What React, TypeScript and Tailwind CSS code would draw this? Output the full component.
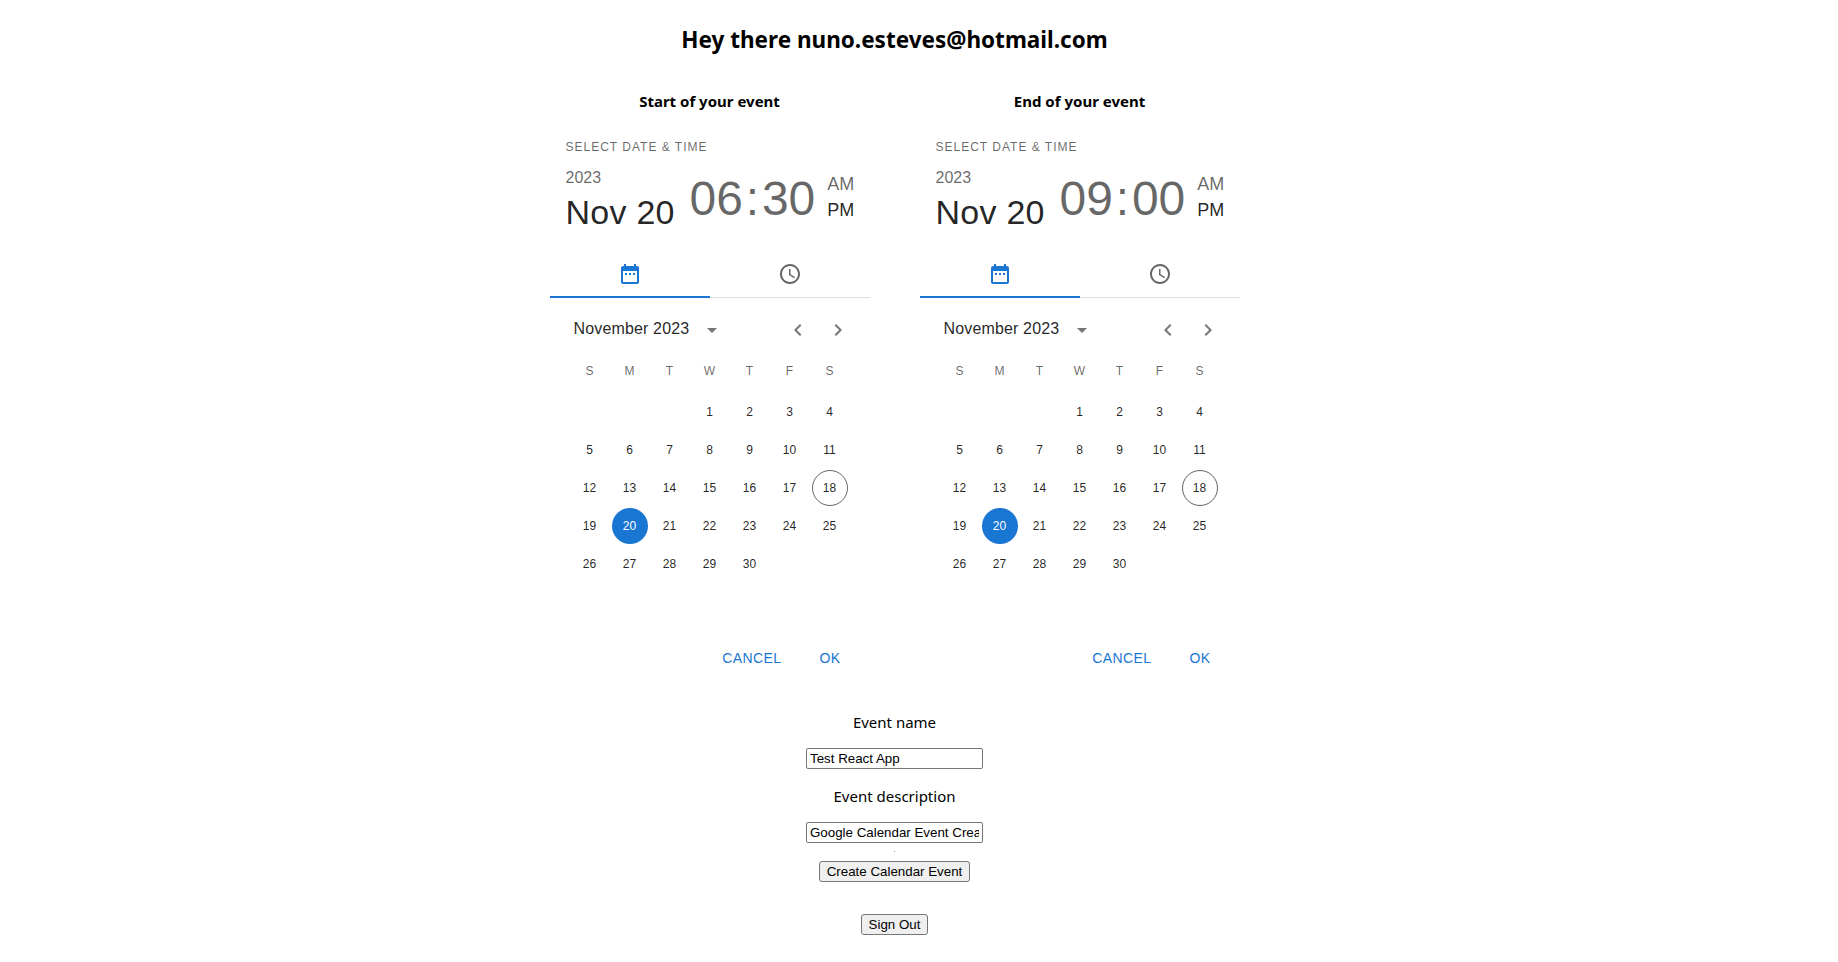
const days = [
  [null, null, null, 1, 2, 3, 4],
  [5, 6, 7, 8, 9, 10, 11],
  [12, 13, 14, 15, 16, 17, 18],
  [19, 20, 21, 22, 23, 24, 25],
  [26, 27, 28, 29, 30, null, null],
];
const weekdays = ["S", "M", "T", "W", "T", "F", "S"];

function Picker({ title, hour, minute }: { title: string; hour: string; minute: string }) {
  return (
    <div className="w-[320px] shrink-0 font-['Liberation_Sans',sans-serif]">
      <h3 className="h-[22px] text-center font-['Noto_Sans',sans-serif] text-[15px] leading-[22px] font-bold text-black">
        {title}
      </h3>
      <div className="mt-[25px] px-4">
        <div className="text-[12px] leading-[20px] tracking-[0.08333em] text-[#0009]">SELECT DATE &amp; TIME</div>
        <div className="mt-[9px] flex">
          <div className="w-[124px] shrink-0">
            <div className="text-[16px] leading-[24px] text-[#0009]">2023</div>
            <div className="mt-[2px] text-[34px] leading-[40px] tracking-[0.00735em] text-[#000000de]">Nov 20</div>
          </div>
          <div className="mt-[5px] flex h-[56px] shrink-0 text-[48px] leading-[56px] text-[#0009]">
            <span>{hour}</span>
            <span className="w-[19px] text-center">:</span>
            <span>{minute}</span>
          </div>
          <div className="mt-[5px] ml-[12px] shrink-0 text-[18px] leading-[26px]">
            <div className="text-[#0009]">AM</div>
            <div className="text-[#000000de]">PM</div>
          </div>
        </div>
      </div>
      <div className="mt-[18px] flex h-[48px] border-b border-[#e0e0e0]">
        <div className="-mb-px flex w-1/2 items-center justify-center border-b-2 border-[#1976d2]">
          <svg viewBox="0 0 24 24" className="mt-[1px] h-6 w-6 fill-[#1976d2]">
            <path d="M9 11H7v2h2v-2zm4 0h-2v2h2v-2zm4 0h-2v2h2v-2zm2-7h-1V2h-2v2H8V2H6v2H5c-1.11 0-1.99.9-1.99 2L3 20c0 1.1.89 2 2 2h14c1.1 0 2-.9 2-2V6c0-1.1-.9-2-2-2zm0 16H5V9h14v11z" />
          </svg>
        </div>
        <div className="flex w-1/2 items-center justify-center">
          <svg viewBox="0 0 24 24" className="h-6 w-6 fill-[#0009]">
            <path d="M11.99 2C6.47 2 2 6.48 2 12s4.47 10 9.99 10C17.52 22 22 17.52 22 12S17.52 2 11.99 2zM12 20c-4.42 0-8-3.58-8-8s3.58-8 8-8 8 3.58 8 8-3.58 8-8 8z" />
            <path d="M12.5 7H11v6l5.25 3.15.75-1.23-4.5-2.67z" />
          </svg>
        </div>
      </div>
      <div className="mt-[16px] flex h-[30px] items-center pr-[12px] pl-[24px]">
        <span className="text-[16px] leading-[24px] tracking-[0.00938em] text-[#000000de]">November 2023</span>
        <svg viewBox="0 0 24 24" className="mt-[1px] ml-[11px] h-6 w-6 fill-[#0000008a]">
          <path d="M7 10l5 5 5-5z" />
        </svg>
        <svg viewBox="0 0 24 24" className="mt-[1px] ml-auto h-6 w-6 fill-[#0000008a]">
          <path d="M15.41 16.59L10.83 12l4.58-4.59L14 6l-6 6 6 6 1.41-1.41z" />
        </svg>
        <svg viewBox="0 0 24 24" className="mt-[1px] mr-[8px] ml-[16px] h-6 w-6 fill-[#0000008a]">
          <path d="M8.59 16.59L13.17 12 8.59 7.41 10 6l6 6-6 6-1.41-1.41z" />
        </svg>
      </div>
      <div className="mt-[6px] px-[20px]">
        <div className="grid h-[43px] grid-cols-7 items-start pt-[12px] text-center text-[12px] text-[#0009]">
          {weekdays.map((d, i) => (
            <span key={i}>{d}</span>
          ))}
        </div>
        {days.map((week, w) => (
          <div key={w} className="grid h-[38px] grid-cols-7 items-center justify-items-center">
            {week.map((d, i) => (
              <div
                key={i}
                className={
                  "flex h-[36px] w-[36px] items-center justify-center rounded-full text-[12px] " +
                  (d === 20
                    ? "bg-[#1976d2] font-medium text-white"
                    : d === 18
                      ? "border border-[#0009] text-[#000000de]"
                      : "text-[#000000de]")
                }
              >
                {d}
              </div>
            ))}
          </div>
        ))}
      </div>
      <div className="mt-[57px] flex h-[36px] items-center justify-end pr-[29px] text-[14px] tracking-[0.02857em] text-[#1976d2]">
        <span>CANCEL</span>
        <span className="ml-[38px]">OK</span>
      </div>
    </div>
  );
}

export default function App() {
  return (
    <div className="min-h-screen bg-white">
      <div className="flex w-[1789px] flex-col items-center pt-[20px] font-['Noto_Sans',sans-serif] text-black">
        <h2 className="h-[40px] text-[22.5px] leading-[40px] font-bold">Hey there nuno.esteves@hotmail.com</h2>
        <div className="mt-[30px] flex gap-[50px]">
          <Picker title="Start of your event" hour="06" minute="30" />
          <Picker title="End of your event" hour="09" minute="00" />
        </div>
        <p className="mt-[34px] text-[15px] leading-[24px]">Event name</p>
        <input
          readOnly
          value="Test React App"
          className="mt-[14px] h-[21px] w-[177px] rounded-[2px] border border-[#767676] px-[3px] font-['Liberation_Sans',sans-serif] text-[13.33px] text-black"
        />
        <p className="mt-[15px] text-[15px] leading-[24px]">Event description</p>
        <input
          readOnly
          value="Google Calendar Event Creator"
          className="mt-[14px] h-[21px] w-[177px] rounded-[2px] border border-[#767676] px-[3px] font-['Liberation_Sans',sans-serif] text-[13.33px] text-black"
        />
        <div className="mt-[8px] h-px w-px bg-[#999]" />
        <button className="mt-[9px] h-[21px] w-[151px] rounded-[3px] border border-[#767676] bg-[#efefef] font-['Liberation_Sans',sans-serif] text-[13.33px] text-black">
          Create Calendar Event
        </button>
        <button className="mt-[32px] h-[21px] w-[67px] rounded-[3px] border border-[#767676] bg-[#efefef] font-['Liberation_Sans',sans-serif] text-[13.33px] text-black">
          Sign Out
        </button>
      </div>
    </div>
  );
}
